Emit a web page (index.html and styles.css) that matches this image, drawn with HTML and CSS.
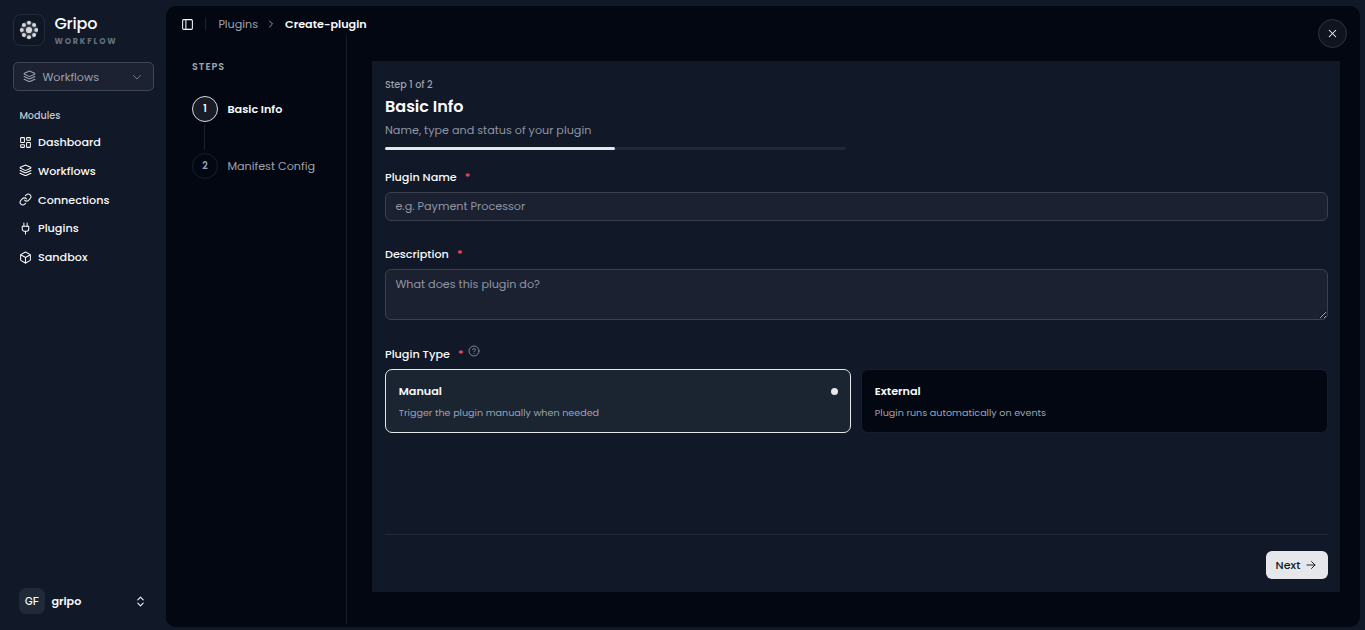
FILE: index.html
```html
<!DOCTYPE html>
<html lang="en">
<head>
<meta charset="utf-8">
<title>Gripo - Create plugin</title>
<link rel="stylesheet" href="styles.css">
</head>
<body>
<div class="app">

  <aside class="sidebar">
    <div class="brand">
      <div class="logo">
        <svg width="24" height="24" viewBox="0 0 24 24" fill="#d6d8dc">
          <circle class="glow" cx="12" cy="12" r="9"/>
          <circle cx="12" cy="12" r="3.1"/>
          <circle cx="12" cy="4.8" r="2"/><circle cx="17.1" cy="6.9" r="2"/>
          <circle cx="19.2" cy="12" r="2"/><circle cx="17.1" cy="17.1" r="2"/>
          <circle cx="12" cy="19.2" r="2"/><circle cx="6.9" cy="17.1" r="2"/>
          <circle cx="4.8" cy="12" r="2"/><circle cx="6.9" cy="6.9" r="2"/>
        </svg>
      </div>
      <div>
        <div class="brand-name">Gripo</div>
        <div class="brand-sub">WORKFLOW</div>
      </div>
    </div>

    <div class="switcher">
      <svg class="icon" width="13" height="13" viewBox="0 0 24 24"><path d="m12.83 2.18a2 2 0 0 0-1.66 0L2.6 6.08a1 1 0 0 0 0 1.83l8.58 3.91a2 2 0 0 0 1.66 0l8.58-3.9a1 1 0 0 0 0-1.83Z"/><path d="m22 12-9.17 4.16a2 2 0 0 1-1.66 0L2 12"/><path d="m22 17-9.17 4.16a2 2 0 0 1-1.66 0L2 17"/></svg>
      <span>Workflows</span>
      <svg class="icon caret" width="12" height="12" viewBox="0 0 24 24"><path d="m5 9 7 7 7-7"/></svg>
    </div>

    <div class="nav-title">Modules</div>
    <nav class="nav">
      <a class="nav-item"><svg class="icon" width="13" height="13" viewBox="0 0 24 24"><rect x="3" y="3" width="7" height="9" rx="1"/><rect x="14" y="3" width="7" height="5" rx="1"/><rect x="14" y="12" width="7" height="9" rx="1"/><rect x="3" y="16" width="7" height="5" rx="1"/></svg><span>Dashboard</span></a>
      <a class="nav-item"><svg class="icon" width="13" height="13" viewBox="0 0 24 24"><path d="m12.83 2.18a2 2 0 0 0-1.66 0L2.6 6.08a1 1 0 0 0 0 1.83l8.58 3.91a2 2 0 0 0 1.66 0l8.58-3.9a1 1 0 0 0 0-1.83Z"/><path d="m22 12-9.17 4.16a2 2 0 0 1-1.66 0L2 12"/><path d="m22 17-9.17 4.16a2 2 0 0 1-1.66 0L2 17"/></svg><span>Workflows</span></a>
      <a class="nav-item"><svg class="icon" width="13" height="13" viewBox="0 0 24 24"><path d="M10 13a5 5 0 0 0 7.54.54l3-3a5 5 0 0 0-7.07-7.07l-1.72 1.71"/><path d="M14 11a5 5 0 0 0-7.54-.54l-3 3a5 5 0 0 0 7.07 7.07l1.71-1.71"/></svg><span>Connections</span></a>
      <a class="nav-item"><svg class="icon" width="13" height="13" viewBox="0 0 24 24"><path d="M12 22v-5"/><path d="M9 8V2"/><path d="M15 8V2"/><path d="M18 8v5a4 4 0 0 1-4 4h-4a4 4 0 0 1-4-4V8Z"/></svg><span>Plugins</span></a>
      <a class="nav-item"><svg class="icon" width="13" height="13" viewBox="0 0 24 24"><path d="M21 8a2 2 0 0 0-1-1.73l-7-4a2 2 0 0 0-2 0l-7 4A2 2 0 0 0 3 8v8a2 2 0 0 0 1 1.73l7 4a2 2 0 0 0 2 0l7-4A2 2 0 0 0 21 16Z"/><path d="m3.3 7 8.7 5 8.7-5"/><path d="M12 22V12"/></svg><span>Sandbox</span></a>
    </nav>

    <div class="user">
      <span class="avatar">GF</span>
      <span class="user-name">gripo</span>
      <svg class="icon" width="13" height="13" viewBox="0 0 24 24"><path d="m7 15 5 5 5-5"/><path d="m7 9 5-5 5 5"/></svg>
    </div>
  </aside>

  <main class="main">
    <header class="topbar">
      <svg class="icon" width="13" height="13" viewBox="0 0 24 24"><rect x="3" y="3" width="18" height="18" rx="2"/><path d="M9 3v18"/></svg>
      <span class="divider"></span>
      <span class="crumb">Plugins</span>
      <svg class="icon crumb-sep" width="12" height="12" viewBox="0 0 24 24"><path d="m9 18 6-6-6-6"/></svg>
      <span class="crumb-current">Create-plugin</span>
    </header>
    <button class="close"><svg class="icon" width="13" height="13" viewBox="0 0 24 24"><path d="M18 6 6 18"/><path d="m6 6 12 12"/></svg></button>

    <div class="body">
      <section class="steps">
        <div class="steps-title">STEPS</div>
        <div class="step step-active"><span class="step-num">1</span><span class="step-label">Basic Info</span></div>
        <div class="step-line"></div>
        <div class="step"><span class="step-num">2</span><span class="step-label">Manifest Config</span></div>
      </section>

      <form class="panel">
        <div class="step-count">Step 1 of 2</div>
        <h2 class="title">Basic Info</h2>
        <div class="subtitle">Name, type and status of your plugin</div>
        <div class="progress"><div class="progress-fill"></div></div>

        <label class="label"><span>Plugin Name</span><span class="req">*</span></label>
        <input class="field" type="text" placeholder="e.g. Payment Processor">

        <label class="label label-desc"><span>Description</span><span class="req">*</span></label>
        <textarea class="field area" placeholder="What does this plugin do?"></textarea>

        <label class="label label-type"><span>Plugin Type</span><span class="req">*</span>
          <svg class="icon help" width="12" height="12" viewBox="0 0 24 24"><circle cx="12" cy="12" r="10"/><path d="M9.09 9a3 3 0 0 1 5.83 1c0 2-3 3-3 3"/><path d="M12 17h.01"/></svg>
        </label>
        <div class="types">
          <div class="type type-on">
            <div class="type-head"><span>Manual</span><i class="dot"></i></div>
            <div class="type-text">Trigger the plugin manually when needed</div>
          </div>
          <div class="type">
            <div class="type-head"><span>External</span></div>
            <div class="type-text">Plugin runs automatically on events</div>
          </div>
        </div>

        <div class="actions">
          <button class="next" type="button"><span>Next</span><svg class="icon" width="12" height="12" viewBox="0 0 24 24"><path d="M4 12h16"/><path d="m13 5 7 7-7 7"/></svg></button>
        </div>
      </form>
    </div>
  </main>

</div>
</body>
</html>
```
FILE: styles.css
```css
* { box-sizing: border-box; }
body {
  margin: 0;
  background: #111827;
  color: #f9fafb;
  font-family: Poppins, Inter, sans-serif;
  font-size: 11.2px;
  line-height: 16px;
}
button, input, textarea { font: inherit; }
.icon { flex: none; fill: none; stroke: currentColor; stroke-width: 1.9; stroke-linecap: round; stroke-linejoin: round; }
.app { display: flex; height: 630px; overflow: hidden; }

/* sidebar */
.sidebar { display: flex; flex-direction: column; width: 166px; padding: 14px 12px 16px 13px; }
.brand { display: flex; gap: 9.4px; height: 32px; }
.logo { display: flex; align-items: center; justify-content: center; width: 32px; height: 32px; border: 1px solid #252d3b; border-radius: 8px; background: #0f1624; }
.glow { fill: #777c86; opacity: .35; }
.brand-name { height: 20px; font-size: 16px; line-height: 19px; font-weight: 500; letter-spacing: -.2px; }
.brand-sub { margin-top: 1px; font-size: 8px; line-height: 13px; font-weight: 700; letter-spacing: 1.85px; color: #667080; }
.switcher { display: flex; align-items: center; height: 29px; margin-top: 16px; padding: 0 10px 0 9px; border: 1px solid #404653; border-radius: 5px; background: #1c2231; color: #9ca3af; }
.switcher span { flex: 1; margin-left: 6.4px; }
.caret { opacity: .7; }
.nav-title { height: 16px; margin: 17px 0 10px 6.4px; font-size: 9.6px; font-weight: 500; color: #c3c7ce; }
.nav-item { display: flex; align-items: center; gap: 6px; height: 28.8px; padding-left: 6px; font-weight: 500; }
.nav { margin-top: -6.3px; }
.user { display: flex; align-items: center; margin: auto 7px 0 6px; height: 26px; }
.avatar { width: 26px; height: 26px; border-radius: 7px; background: #1f2937; font-family: Inter, sans-serif; font-size: 10.8px; font-weight: 500; line-height: 27px; text-align: center; }
.user-name { flex: 1; margin-left: 6.4px; font-weight: 600; }

/* main area */
.main { position: relative; width: 1194px; height: 621px; margin-top: 6px; border-radius: 10px; background: #030712; }
.topbar { display: flex; align-items: center; height: 29px; padding: 7px 0 0 15px; }
.divider { width: 1px; height: 12px; margin: 0 12.4px 0 11px; background: #1f2633; }
.crumb { color: #9ca3af; }
.crumb-sep { margin: 0 8px 0 7px; color: #9ca3af; }
.crumb-current { font-weight: 600; }
.close { position: absolute; top: 13px; right: 13px; display: flex; align-items: center; justify-content: center; width: 29px; height: 29px; padding: 0; border: 1px solid #30343f; border-radius: 50%; background: #10141f; color: #f9fafb; }
.body { display: flex; height: 589px; }

/* steps */
.steps { width: 181px; padding: 24px 0 0 26px; border-right: 1px solid #171c28; }
.steps-title { height: 16px; font-size: 9.6px; line-height: 15px; font-weight: 600; letter-spacing: 1px; color: #9ca3af; }
.step { display: flex; align-items: center; height: 26px; color: #9ca3af; }
.step-active { margin-top: 21px; color: #f9fafb; font-weight: 600; }
.step-num { width: 26px; height: 26px; margin-right: 9.4px; border: 1px solid #191f2b; border-radius: 50%; font-size: 9.6px; line-height: 23px; font-weight: 600; text-align: center; }
.step-active .step-num { border-color: #d7d9de; border-width: 1.5px; background: #191c27; }
.step-line { width: 1px; height: 25px; margin: 3px 0 3px 12px; background: #1b202c; }

/* form */
.panel { display: flex; flex-direction: column; width: 968px; height: 531px; margin: 26px 0 0 25px; padding: 16px 12px 13px 13px; background: #111827; }
.step-count { font-size: 9.6px; font-weight: 500; color: #9ca3af; }
.title { margin: 4px 0 0; font-size: 16px; line-height: 20px; font-weight: 600; }
.subtitle { margin-top: 5px; color: #8e96a4; }
.progress { width: 461px; height: 3px; margin-top: 9px; border-radius: 2px; background: #1d2939; }
.progress-fill { width: 230px; height: 3px; border-radius: 2px; background: #e5e7eb; }
.label { display: flex; height: 16px; margin: 19px 0 7px; font-weight: 500; }
.label-desc { margin-top: 25px; }
.label-type { margin-top: 26px; }
.req { margin-left: 8px; color: #fb4b55; }
.help { margin: -1.5px 0 0 4px; color: #8a919e; stroke-width: 1.8; }
.field { display: block; width: 100%; height: 29px; padding: 0 9.4px 1px; border: 1px solid #3a404d; border-radius: 6px; outline: 0; background: #1b2130; color: #f9fafb; }
.field::placeholder { color: #8f97a5; opacity: 1; }
.area { height: 51px; padding: 6px 9.4px; resize: vertical; }
.types { display: grid; grid-template-columns: 466px 467px; gap: 10px; }
.type { height: 64px; padding: 13px 12px 0 12.8px; border: 1px solid #181f2c; border-radius: 7px; background: #030712; }
.type-on { border-color: #e5e7eb; background: #1b2431; }
.type-head { display: flex; align-items: center; justify-content: space-between; font-weight: 600; }
.dot { width: 7px; height: 7px; border-radius: 50%; background: #e5e7eb; }
.type-text { margin-top: 6px; font-size: 9.6px; color: #9ca3af; }
.actions { display: flex; justify-content: flex-end; margin-top: auto; padding-top: 16px; border-top: 1px solid #202b3a; }
.next { display: flex; align-items: center; gap: 5px; width: 62px; height: 28px; padding: 0 9.6px; border: 0; border-radius: 6px; background: #e5e7eb; color: #111827; font-weight: 500; }
```
